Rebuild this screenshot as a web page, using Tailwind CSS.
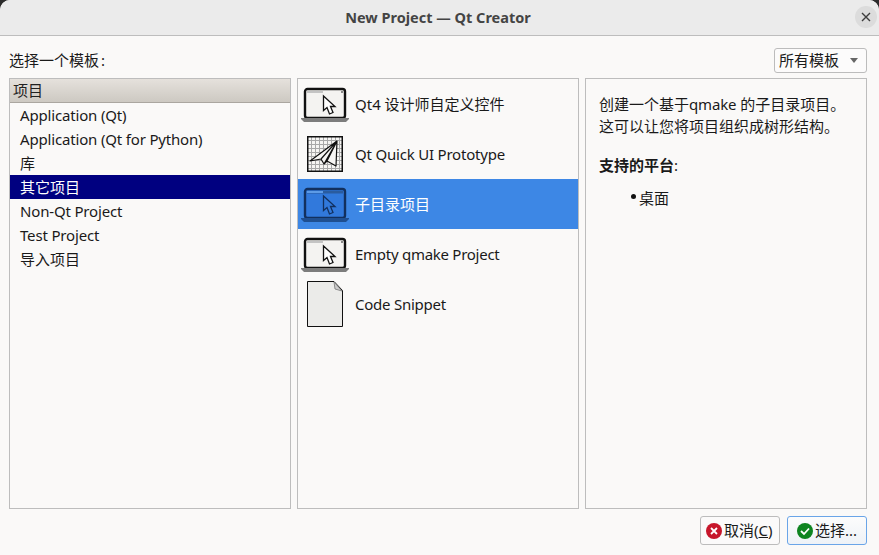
<!DOCTYPE html>
<html lang="zh-CN">
<head>
    <meta charset="UTF-8">
    <title>New Project — Qt Creator</title>
    <script src="https://cdn.jsdelivr.net/npm/@tailwindcss/browser@4"></script>
</head>
<body class="bg-[#2c2c2c]">
    <div class="w-[879px] h-[555px] overflow-hidden rounded-t-[10px] bg-[#faf9f8] flex flex-col text-[15px] text-[#1a1a1a] font-['Noto_Sans','Noto_Sans_CJK_SC',sans-serif]">
        <!-- title bar -->
        <div class="relative h-[36px] shrink-0 bg-[#ebebeb] border-b border-[#bdbdbd] flex items-center justify-center pr-[3px]">
            <span class="text-[14.5px] font-bold text-[#444]">New Project — Qt Creator</span>
            <div class="absolute right-[2px] top-[6px] w-[22px] h-[22px] rounded-full bg-[#dcdcdc] flex items-center justify-center">
                <svg width="10" height="10" viewBox="0 0 10 10"><path d="M1 1L9 9M9 1L1 9" stroke="#3d3d3d" stroke-width="1.4"/></svg>
            </div>
        </div>

        <!-- label row -->
        <div class="h-[42px] shrink-0 pl-[9px] pr-[12px] flex items-center justify-between">
            <span class="mt-[6px]">选择一个模板<span class="ml-[2px]">:</span></span>
            <div class="w-[93px] h-[25px] mt-[6px] border border-[#bcbcbc] rounded-[3px] bg-[#fcfbfb] pl-[4px] pr-[8px] flex items-center justify-between">
                <span>所有模板</span>
                <svg width="8" height="5" viewBox="0 0 8 5"><path d="M0 0H8L4 5Z" fill="#666"/></svg>
            </div>
        </div>

        <!-- panels -->
        <div class="flex gap-[6px] pl-[9px] pr-[12px] h-[431px] shrink-0">
            <div class="w-[282px] border border-[#bdbdbd] flex flex-col">
                <div class="h-[24px] bg-gradient-to-b from-[#e5e1dc] to-[#cdc9c2] border-b border-[#aaa6a0] pl-[3px] flex items-center text-[#222]">项目</div>
                <div class="h-[24px] pl-[10px] flex items-center tracking-[-0.17px]">Application (Qt)</div>
                <div class="h-[24px] pl-[10px] flex items-center tracking-[-0.17px]">Application (Qt for Python)</div>
                <div class="h-[24px] pl-[10px] flex items-center">库</div>
                <div class="h-[24px] pl-[10px] flex items-center bg-[#000080] text-white">其它项目</div>
                <div class="h-[24px] pl-[10px] flex items-center tracking-[-0.17px]">Non-Qt Project</div>
                <div class="h-[24px] pl-[10px] flex items-center tracking-[-0.17px]">Test Project</div>
                <div class="h-[24px] pl-[10px] flex items-center">导入项目</div>
            </div>

            <div class="w-[282px] border border-[#bdbdbd] flex flex-col">
                <div class="h-[50px] flex items-center">
                    <svg class="ml-[3px] mr-[6px] mt-[2px]" width="48" height="36" viewBox="0 0 48 36">
                        <rect x="4" y="2" width="40" height="29" rx="2.5" fill="#f4f3f1" stroke="#111" stroke-width="2.4"/>
                        <rect x="6" y="4" width="16" height="2" fill="#c4c4c4"/>
                        <rect x="40" y="4" width="2" height="2" fill="#888"/>
                        <path d="M0 31H48V32L45 35H3L0 32Z" fill="#7d7d7d"/>
                        <path d="M22.5 9V23.5L26 20.5L28.5 27L32 25.5L29.5 19.5H34Z" fill="#fff" stroke="#111" stroke-width="1.3"/>
                    </svg>
                    <span>Qt4 设计师自定义控件</span>
                </div>
                <div class="h-[50px] flex items-center">
                    <svg class="ml-[9px] mr-[12px]" width="36" height="36" viewBox="0 0 36 36">
                        <rect x="0.5" y="0.5" width="35" height="35" fill="#f6f5f3"/>
                        <path d="M4.5 1V35M8.5 1V35M12.5 1V35M16.5 1V35M20.5 1V35M24.5 1V35M28.5 1V35M32.5 1V35M1 4.5H35M1 8.5H35M1 12.5H35M1 16.5H35M1 20.5H35M1 24.5H35M1 28.5H35M1 32.5H35" stroke="#a8a8a8" stroke-width="1"/>
                        <rect x="0.75" y="0.75" width="34.5" height="34.5" fill="none" stroke="#111" stroke-width="1.5"/>
                        <path d="M30 5L3 25L14 23L17 28L20 25L29 30ZM30 5L14 23M30 5L20 25M30 5L17 28" fill="#f6f5f3" stroke="#111" stroke-width="1.2" stroke-linejoin="round"/>
                    </svg>
                    <span class="tracking-[-0.2px]">Qt Quick UI Prototype</span>
                </div>
                <div class="h-[50px] flex items-center bg-[#3d87e5] text-white">
                    <svg class="ml-[3px] mr-[6px] mt-[2px]" width="48" height="36" viewBox="0 0 48 36">
                        <rect x="4" y="2" width="40" height="29" rx="2.5" fill="#3179dc" stroke="#12305e" stroke-width="2.4"/>
                        <rect x="6" y="4" width="36" height="2.5" fill="#2a5c9f"/>
                        <rect x="6" y="4" width="16" height="2" fill="#5d9be6"/>
                        <path d="M0 31H48V32L45 35H3L0 32Z" fill="#1f4f91"/>
                        <path d="M22.5 9V23.5L26 20.5L28.5 27L32 25.5L29.5 19.5H34Z" fill="#3179dc" stroke="#12305e" stroke-width="1.3"/>
                    </svg>
                    <span>子目录项目</span>
                </div>
                <div class="h-[50px] flex items-center">
                    <svg class="ml-[3px] mr-[6px] mt-[2px]" width="48" height="36" viewBox="0 0 48 36">
                        <rect x="4" y="2" width="40" height="29" rx="2.5" fill="#f4f3f1" stroke="#111" stroke-width="2.4"/>
                        <rect x="6" y="4" width="16" height="2" fill="#c4c4c4"/>
                        <rect x="40" y="4" width="2" height="2" fill="#888"/>
                        <path d="M0 31H48V32L45 35H3L0 32Z" fill="#7d7d7d"/>
                        <path d="M22.5 9V23.5L26 20.5L28.5 27L32 25.5L29.5 19.5H34Z" fill="#fff" stroke="#111" stroke-width="1.3"/>
                    </svg>
                    <span class="tracking-[-0.27px]">Empty qmake Project</span>
                </div>
                <div class="h-[50px] flex items-center">
                    <svg class="ml-[9px] mr-[12px]" width="36" height="46" viewBox="0 0 36 46">
                        <path d="M0.5 0.5H27L35.5 9.5V45.5H0.5Z" fill="#ebebe9" stroke="#111"/>
                        <path d="M27 1L28 8L35 10Z" fill="#ccc" stroke="#777" stroke-width="0.8"/>
                    </svg>
                    <span class="tracking-[-0.25px]">Code Snippet</span>
                </div>
            </div>

            <div class="w-[282px] border border-[#bdbdbd] pl-[13px] pt-[14px]">
                <p class="leading-[22px]">创建一个基于<span class="tracking-[-0.17px]">qmake</span> 的子目录项目。<br>这可以让您将项目组织成树形结构。</p>
                <p class="mt-[17px] font-bold leading-[22px]">支持的平台<span class="font-normal">:</span></p>
                <div class="mt-[11px] pl-[32px] leading-[22px] flex">
                    <span class="w-[5px] h-[5px] rounded-full bg-[#111] mt-[7px] mr-[3px]"></span>
                    <span>桌面</span>
                </div>
            </div>
        </div>

        <!-- buttons -->
        <div class="flex justify-end gap-[7px] pr-[12px] pt-[7px]">
            <button class="w-[80px] h-[29px] border border-[#bcbcbc] rounded-[3px] bg-[#fbfafa] flex items-center pl-[4px]">
                <svg class="mr-[1px]" width="18" height="18" viewBox="0 0 18 18"><circle cx="9" cy="9" r="8" fill="#c7162b"/><path d="M6 6L12 12M12 6L6 12" stroke="#fff" stroke-width="1.8"/></svg>
                <span>取消(<span class="underline">C</span>)</span>
            </button>
            <button class="w-[80px] h-[29px] border border-[#6aa5e8] rounded-[3px] bg-gradient-to-b from-[#fcfcfc] to-[#eef2f7] flex items-center pl-[8px]">
                <svg class="mr-[1px]" width="18" height="18" viewBox="0 0 18 18"><circle cx="9" cy="9" r="8" fill="#0e8420"/><path d="M5 9L8 12L13 6.5" fill="none" stroke="#fff" stroke-width="1.8"/></svg>
                <span>选择...</span>
            </button>
        </div>
    </div>
</body>
</html>
